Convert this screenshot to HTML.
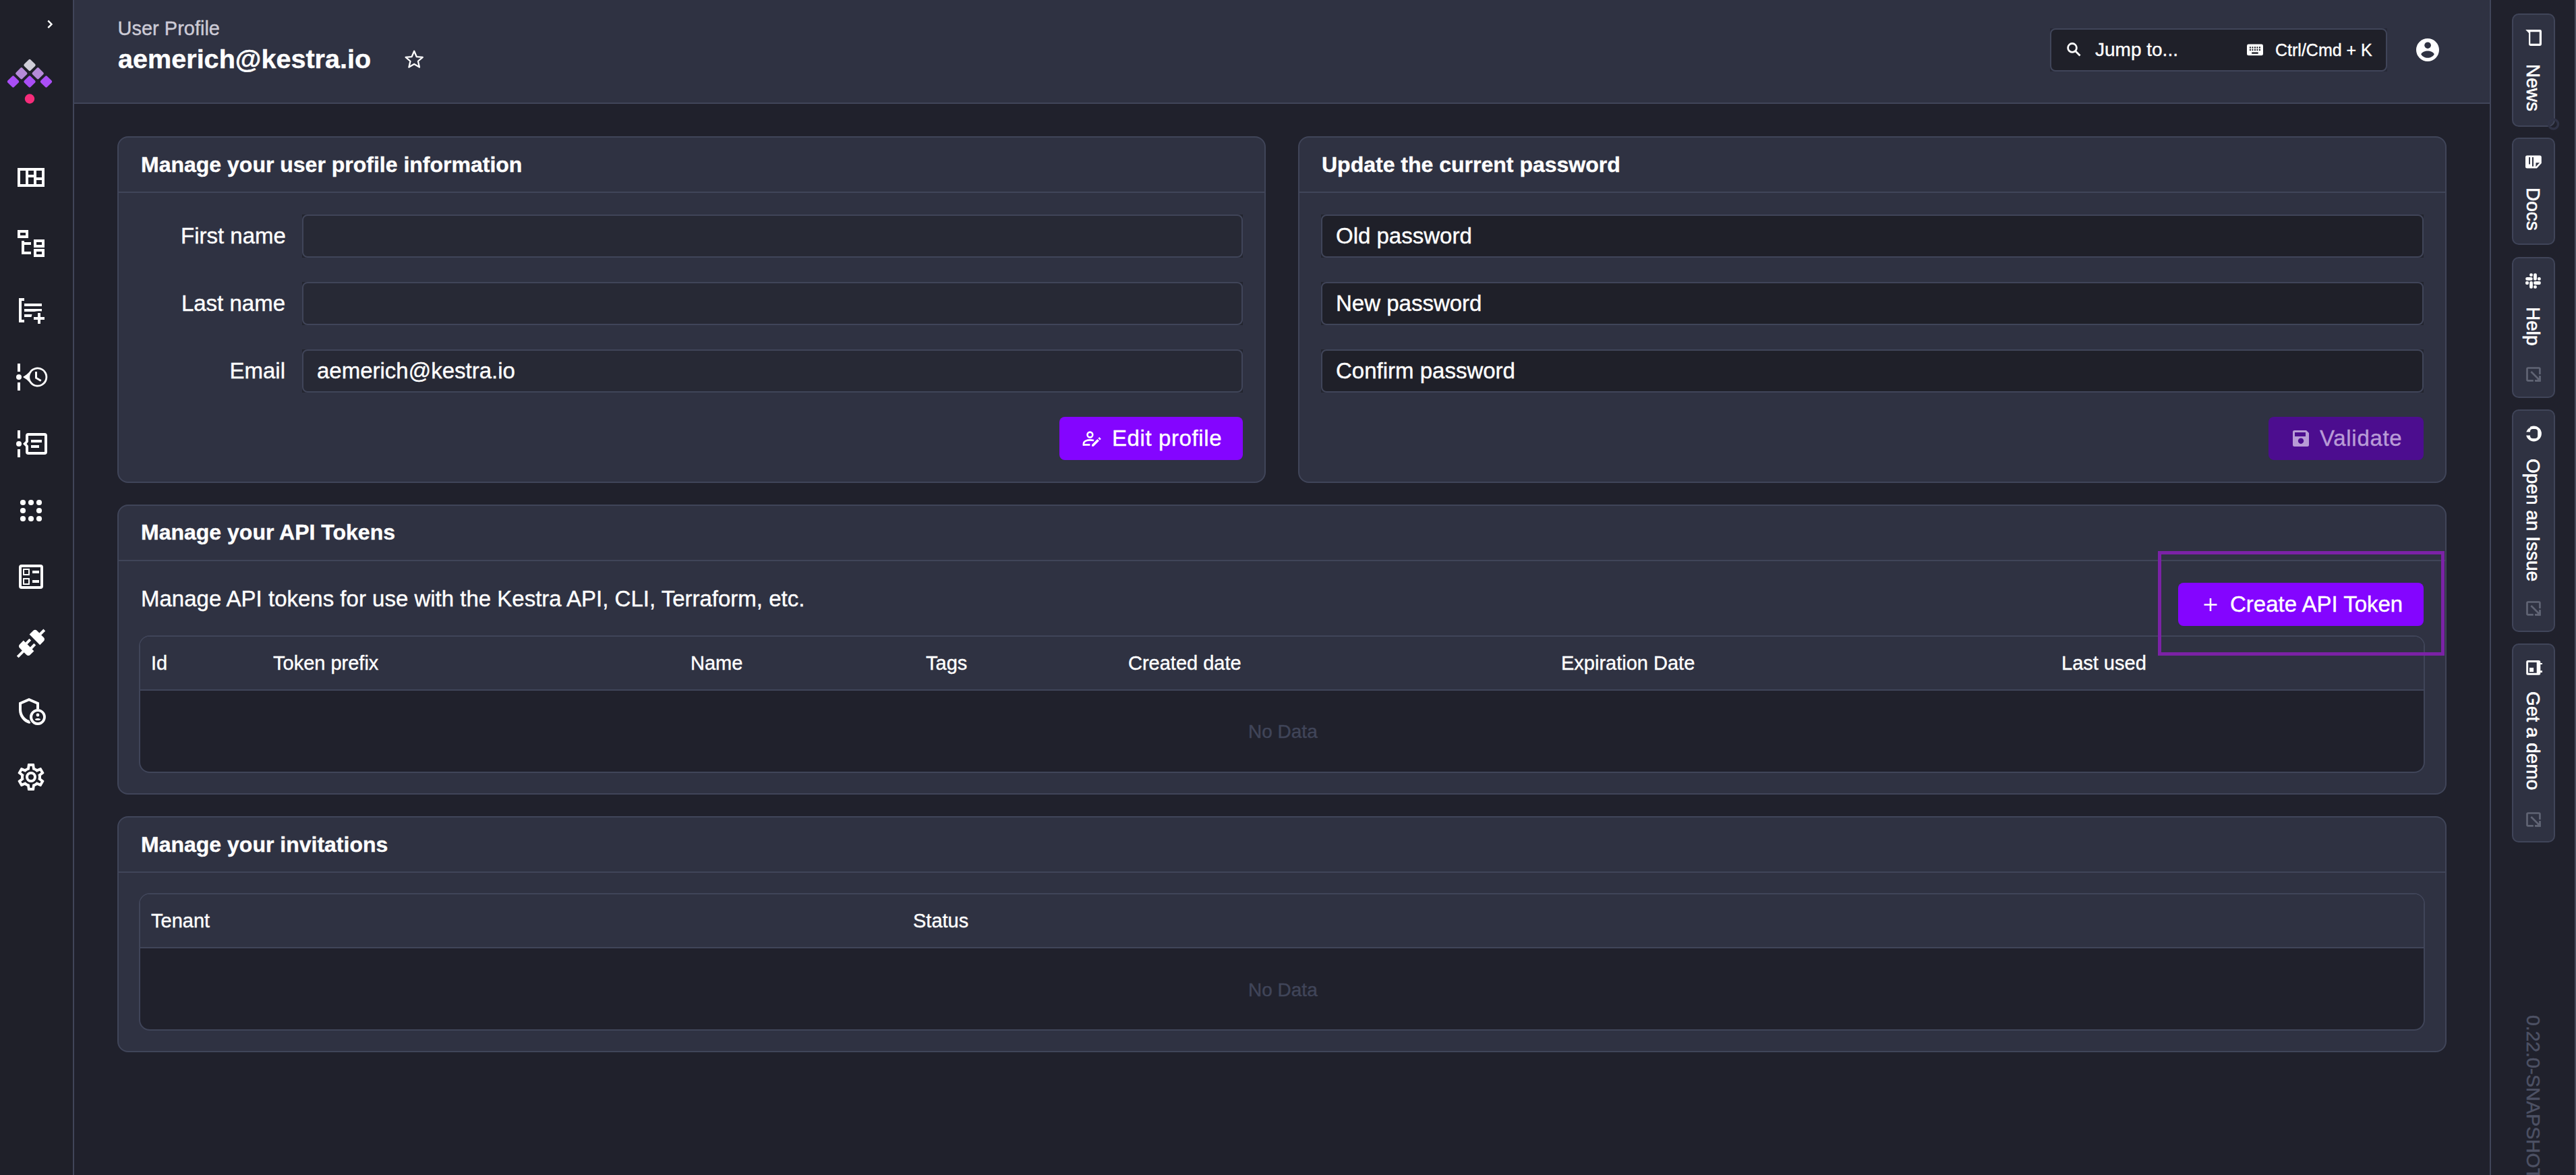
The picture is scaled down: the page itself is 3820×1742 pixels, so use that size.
<!DOCTYPE html>
<html><head><meta charset="utf-8"><style>
*{margin:0;padding:0;box-sizing:border-box}
html,body{width:3820px;height:1742px;overflow:hidden;background:#20212c;font-family:"Liberation Sans",sans-serif;color:#fff}
.a{position:absolute}
.t{position:absolute;white-space:nowrap;line-height:1;-webkit-text-stroke-width:0.4px}
.card{position:absolute;background:#2f3242;border:2px solid #404559;border-radius:16px}
.inp{position:absolute;border:2px solid #404559;border-radius:8px;background:#272935}
.dk{background:#1f2029}
.btn{position:absolute;border-radius:8px;background:#8405ff}
.tbl{position:absolute;border:2px solid #404559;border-radius:16px;background:#20212c;overflow:hidden}
.tab{position:absolute;background:#2f3242;border:2px solid #404559;border-radius:10px}
.vt{position:absolute;writing-mode:vertical-rl;white-space:nowrap;line-height:1;color:#fff}
svg{position:absolute;overflow:visible}
</style></head><body>
<div class="a" style="left:0px;top:0px;width:110px;height:1742px;background:#1f2029;border-right:2px solid #404559"></div>
<div class="a" style="left:110px;top:0px;width:3584px;height:154px;background:#2f3242;border-bottom:2px solid #404559"></div>
<div class="a" style="left:3692px;top:0px;width:128px;height:1742px;background:#20212c;border-left:2px solid #404559"></div>
<div class="t" style="left:174.5px;top:27.9px;font-size:29px;color:#cdcbd6;">User Profile</div>
<div class="t" style="left:175px;top:68.0px;font-size:39.6px;color:#fff;font-weight:700;">aemerich@kestra.io</div>
<svg style="left:0;top:0" width="1" height="1"><path d="M614.20,75.70 L617.73,84.05 L626.75,84.82 L619.91,90.75 L621.96,99.58 L614.20,94.90 L606.44,99.58 L608.49,90.75 L601.65,84.82 L610.67,84.05 Z" fill="none" stroke="#fff" stroke-width="2.3" stroke-linejoin="round"/></svg>
<div class="a" style="left:3040px;top:42px;width:500px;height:64px;background:#262836"></div>
<div class="inp dk" style="left:3040px;top:42px;width:500px;height:64px;"></div>
<svg style="left:0;top:0" width="1" height="1"><circle cx="3073" cy="70.9" r="6.4" fill="none" stroke="#fff" stroke-width="2.8"/><line x1="3077.5" y1="75.5" x2="3084.5" y2="82.5" stroke="#fff" stroke-width="2.8"/></svg>
<div class="t" style="left:3107px;top:59.7px;font-size:28px;color:#fff;">Jump to...</div>
<svg style="left:0;top:0" width="1" height="1"><rect x="3332" y="65.6" width="24" height="16.7" rx="2.4" fill="#fff"/><rect x="3335.9" y="69.3" width="2" height="2.3" fill="#1f2029"/><rect x="3339.4" y="69.3" width="2" height="2.3" fill="#1f2029"/><rect x="3343" y="69.3" width="2" height="2.3" fill="#1f2029"/><rect x="3346.4" y="69.3" width="2" height="2.3" fill="#1f2029"/><rect x="3350" y="69.3" width="2" height="2.3" fill="#1f2029"/><rect x="3335.9" y="72.8" width="2" height="2.3" fill="#1f2029"/><rect x="3339.4" y="72.8" width="2" height="2.3" fill="#1f2029"/><rect x="3343" y="72.8" width="2" height="2.3" fill="#1f2029"/><rect x="3346.4" y="72.8" width="2" height="2.3" fill="#1f2029"/><rect x="3350" y="72.8" width="2" height="2.3" fill="#1f2029"/><rect x="3339.2" y="77.4" width="9.5" height="2.4" fill="#1f2029"/></svg>
<div class="t" style="left:3374px;top:61.8px;font-size:25px;color:#fff;">Ctrl/Cmd + K</div>
<svg style="left:0;top:0" width="1" height="1"><circle cx="3600" cy="74" r="17" fill="#fff"/><circle cx="3600.1" cy="67.2" r="4.8" fill="#2f3242"/><path d="M3590.2,80.3C3593,73.8 3607.2,73.8 3609.8,80.3C3606.5,87.6 3593.5,87.6 3590.2,80.3Z" fill="#2f3242"/></svg>
<svg style="left:0;top:0" width="1" height="1"><polyline points="71.3,30.7 76.5,36 71.3,41.2" fill="none" stroke="#fff" stroke-width="2.4"/></svg>
<svg style="left:0;top:0" width="1" height="1"><rect x="37.30" y="89.80" width="13.4" height="13.4" rx="2" fill="#d0ced8" transform="rotate(45 44 96.5)"/><rect x="25.10" y="102.10" width="13.4" height="13.4" rx="2" fill="#b58ad8" transform="rotate(45 31.8 108.8)"/><rect x="49.50" y="102.10" width="13.4" height="13.4" rx="2" fill="#b58ad8" transform="rotate(45 56.2 108.8)"/><rect x="12.80" y="114.30" width="13.4" height="13.4" rx="2" fill="#aa4ef6" transform="rotate(45 19.5 121)"/><rect x="37.30" y="114.30" width="13.4" height="13.4" rx="2" fill="#aa4ef6" transform="rotate(45 44 121)"/><rect x="61.80" y="114.30" width="13.4" height="13.4" rx="2" fill="#aa4ef6" transform="rotate(45 68.5 121)"/><circle cx="44" cy="146.5" r="7.2" fill="#f62c7a"/></svg>
<svg style="left:0;top:0" width="1" height="1" fill="#fff"><path fill-rule="evenodd" d="M26,249H66V277H26Z M30,253V273H38V253Z M42,253V259H50V253Z M42,263V273H50V263Z M54,253V263H62V253Z M54,267V273H62V267Z"/><path fill-rule="evenodd" d="M26,341H42V353H26Z M30,345V349H38V345Z"/><path d="M32,357H36V359H46V363H36V373H46V377H32Z"/><path fill-rule="evenodd" d="M50,355H66V367H50Z M54,359V363H62V359Z"/><path fill-rule="evenodd" d="M50,369H66V381H50Z M54,373V377H62V373Z"/><path d="M28,442H36V446H32V474H36V478H28Z"/><rect x="36" y="450" width="26" height="4"/><path d="M36,458H62V461.5C58,461 54,461 51,462H36Z"/><path d="M36,466H47.5L46.5,470H36Z"/><path d="M56,464H60V470H66V474H60V480H56V474H50V470H56Z"/><rect x="26" y="539" width="4" height="12"/><circle cx="28" cy="559" r="4"/><rect x="26" y="567" width="4" height="12"/><path fill-rule="evenodd" d="M34,559Q40,555.5 43.24,551.75A14.5,14.5 0 1 1 43.24,566.25Q40,562.5 34,559Z M55.8,547.3A11.7,11.7 0 1 0 55.81,547.3Z"/><path d="M52,551H55V559.5L61.5,563.3L60,565.8L52,561Z"/><rect x="26" y="638" width="4" height="12"/><circle cx="28" cy="658" r="4"/><rect x="26" y="666" width="4" height="12"/><path fill-rule="evenodd" d="M42,642H66A4,4 0 0 1 70,646V670A4,4 0 0 1 66,674H42A4,4 0 0 1 38,670V662L34,658L38,654V646A4,4 0 0 1 42,642Z M42,646V655L39.5,658L42,661V670H66V646Z"/><rect x="46" y="652" width="16" height="4"/><rect x="46" y="660" width="12" height="4"/><circle cx="34" cy="745" r="4.1"/><circle cx="46" cy="745" r="4.1"/><circle cx="58" cy="745" r="4.1"/><circle cx="34" cy="757" r="4.1"/><circle cx="58" cy="757" r="4.1"/><circle cx="34" cy="769" r="4.1"/><circle cx="46" cy="769" r="4.1"/><circle cx="58" cy="769" r="4.1"/><path fill-rule="evenodd" d="M32,837H60A4,4 0 0 1 64,841V869A4,4 0 0 1 60,873H32A4,4 0 0 1 28,869V841A4,4 0 0 1 32,837Z M32,841V869H60V841Z"/><path fill-rule="evenodd" d="M34,843H44V853H34Z M36,845V851H42V845Z"/><rect x="48" y="846" width="10" height="4"/><path fill-rule="evenodd" d="M34,857H44V867H34Z M36,859V865H42V859Z"/><rect x="48" y="860" width="10" height="4"/><path transform="translate(22 930) scale(2)" d="M21.4 7.5C22.2 8.3 22.2 9.6 21.4 10.3L18.6 13.1L10.8 5.3L13.6 2.5C14.4 1.7 15.7 1.7 16.4 2.5L18.2 4.3L21.2 1.3L22.6 2.7L19.6 5.7L21.4 7.5M15.6 13.3L14.2 11.9L11.4 14.7L9.3 12.6L12.1 9.8L10.7 8.4L7.9 11.2L6.4 9.8L3.6 12.6C2.8 13.4 2.8 14.7 3.6 15.4L5.4 17.2L1.4 21.2L2.8 22.6L6.8 18.6L8.6 20.4C9.4 21.2 10.7 21.2 11.4 20.4L14.2 17.6L12.8 16.2L15.6 13.3Z"/><path d="M43,1035L58,1041.5V1051A12,12 0 0 0 54,1051.3V1044L43,1039.2L32,1044V1052C32,1059 36.5,1065.5 43.5,1068C44,1069.5 44.6,1070.8 45.4,1071.9C44.6,1072.2 43.8,1072.5 43,1072.7C34.5,1070.5 28,1062 28,1052.5V1041.5Z"/><path fill-rule="evenodd" d="M56,1051A12,12 0 1 1 55.9,1051Z M56,1055A8,8 0 1 0 56.1,1055Z"/><circle cx="56" cy="1060" r="2.4"/><path d="M51.8,1066.6C53,1064.6 59,1064.6 60.2,1066.6C59,1068.6 53,1068.6 51.8,1066.6Z"/><path transform="translate(22 1128) scale(2)" d="M12,8A4,4 0 0,1 16,12A4,4 0 0,1 12,16A4,4 0 0,1 8,12A4,4 0 0,1 12,8M12,10A2,2 0 0,0 10,12A2,2 0 0,0 12,14A2,2 0 0,0 14,12A2,2 0 0,0 12,10M10,22C9.75,22 9.54,21.82 9.5,21.58L9.13,18.93C8.5,18.68 7.96,18.34 7.44,17.94L4.95,18.95C4.73,19.03 4.46,18.95 4.34,18.73L2.34,15.27C2.21,15.05 2.27,14.78 2.46,14.63L4.57,12.97L4.5,12L4.57,11L2.46,9.37C2.27,9.22 2.21,8.95 2.34,8.73L4.34,5.27C4.46,5.05 4.73,4.96 4.95,5.05L7.44,6.05C7.96,5.66 8.5,5.32 9.13,5.07L9.5,2.42C9.54,2.18 9.75,2 10,2H14C14.25,2 14.46,2.18 14.5,2.42L14.87,5.07C15.5,5.32 16.04,5.66 16.56,6.05L19.05,5.05C19.27,4.96 19.54,5.05 19.66,5.27L21.66,8.73C21.79,8.95 21.73,9.22 21.54,9.37L19.43,11L19.5,12L19.43,13L21.54,14.63C21.730,14.78 21.79,15.05 21.66,15.27L19.66,18.73C19.54,18.95 19.27,19.04 19.05,18.95L16.56,17.95C16.04,18.34 15.5,18.68 14.87,18.93L14.5,21.58C14.46,21.82 14.25,22 14,22H10M11.25,4L10.88,6.61C9.68,6.86 8.62,7.5 7.85,8.39L5.44,7.35L4.69,8.65L6.8,10.2C6.4,11.37 6.4,12.64 6.8,13.8L4.68,15.36L5.43,16.66L7.86,15.62C8.63,16.5 9.68,17.14 10.87,17.38L11.24,20H12.76L13.13,17.39C14.32,17.14 15.37,16.5 16.14,15.62L18.57,16.66L19.32,15.36L17.2,13.81C17.6,12.64 17.6,11.37 17.2,10.2L19.31,8.650L18.56,7.35L16.15,8.39C15.38,7.5 14.32,6.86 13.12,6.62L12.75,4H11.25Z"/></svg>
<div class="card" style="left:174px;top:202px;width:1703px;height:514px;"></div>
<div class="a" style="left:174px;top:284px;width:1703px;height:2px;background:#404559"></div>
<div class="t" style="left:209px;top:227.7px;font-size:32px;color:#fff;font-weight:700;">Manage your user profile information</div>
<div class="t" style="left:268px;top:333.1px;font-size:33px;color:#fff;width:155px;text-align:right;">First name</div>
<div class="a" style="left:448px;top:318px;width:1395px;height:64px;background:#23252f"></div>
<div class="inp" style="left:448px;top:318px;width:1395px;height:64px;"></div>
<div class="t" style="left:268px;top:433.1px;font-size:33px;color:#fff;width:155px;text-align:right;">Last name</div>
<div class="a" style="left:448px;top:418px;width:1395px;height:64px;background:#23252f"></div>
<div class="inp" style="left:448px;top:418px;width:1395px;height:64px;"></div>
<div class="t" style="left:268px;top:533.1px;font-size:33px;color:#fff;width:155px;text-align:right;">Email</div>
<div class="a" style="left:448px;top:518px;width:1395px;height:64px;background:#23252f"></div>
<div class="inp" style="left:448px;top:518px;width:1395px;height:64px;"></div>
<div class="t" style="left:470px;top:533.1px;font-size:33px;color:#fff;">aemerich@kestra.io</div>
<div class="btn" style="left:1571px;top:618px;width:272px;height:64px;"></div>
<svg style="left:0;top:0" width="1" height="1"><circle cx="1616.4" cy="644.5" r="3.9" fill="none" stroke="#fff" stroke-width="2.6"/><path d="M1607,660.5V657.5C1607,654 1612,652.4 1616.5,652.4C1618.7,652.4 1620.6,652.7 1622,653.1" fill="none" stroke="#fff" stroke-width="2.6"/><path d="M1605.8,659.4H1616.4" stroke="#fff" stroke-width="2.8"/><path d="M1619.1,661.8V659.2L1627.4,650.9L1630,653.5L1621.7,661.8Z M1628.4,649.9L1630.2,648.1L1632.8,650.7L1631,652.5Z" fill="#fff"/></svg>
<div class="t" style="left:1649px;top:633.3px;font-size:33px;color:#fff;letter-spacing:0.6px;">Edit profile</div>
<div class="card" style="left:1925px;top:202px;width:1703px;height:514px;"></div>
<div class="a" style="left:1925px;top:284px;width:1703px;height:2px;background:#404559"></div>
<div class="t" style="left:1960px;top:227.7px;font-size:32px;color:#fff;font-weight:700;">Update the current password</div>
<div class="a" style="left:1959px;top:318px;width:1635px;height:64px;background:#23252f"></div>
<div class="inp dk" style="left:1959px;top:318px;width:1635px;height:64px;"></div>
<div class="t" style="left:1981px;top:333.1px;font-size:33px;color:#fff;">Old password</div>
<div class="a" style="left:1959px;top:418px;width:1635px;height:64px;background:#23252f"></div>
<div class="inp dk" style="left:1959px;top:418px;width:1635px;height:64px;"></div>
<div class="t" style="left:1981px;top:433.1px;font-size:33px;color:#fff;">New password</div>
<div class="a" style="left:1959px;top:518px;width:1635px;height:64px;background:#23252f"></div>
<div class="inp dk" style="left:1959px;top:518px;width:1635px;height:64px;"></div>
<div class="t" style="left:1981px;top:533.1px;font-size:33px;color:#fff;">Confirm password</div>
<div class="btn" style="left:3364px;top:618px;width:230px;height:64px;background:#4c0d8f"></div>
<svg style="left:0;top:0" width="1" height="1"><path fill-rule="evenodd" d="M3402,638H3420L3424,642V659.5A2.5,2.5 0 0 1 3421.5,662H3402.5A2.5,2.5 0 0 1 3400,659.5V640.5A2.5,2.5 0 0 1 3402.5,638Z M3403,641V647H3419V641Z M3412,649.5A4.2,4.2 0 1 0 3412.1,649.5Z" fill="#b89bd6"/></svg>
<div class="t" style="left:3440px;top:633.1px;font-size:33px;color:#b89bd6;letter-spacing:0.7px;">Validate</div>
<div class="card" style="left:174px;top:748px;width:3454px;height:430px;"></div>
<div class="a" style="left:174px;top:830px;width:3454px;height:2px;background:#404559"></div>
<div class="t" style="left:209px;top:772.9px;font-size:32px;color:#fff;font-weight:700;">Manage your API Tokens</div>
<div class="t" style="left:209px;top:871.1px;font-size:33px;color:#fff;">Manage API tokens for use with the Kestra API, CLI, Terraform, etc.</div>
<div class="btn" style="left:3230px;top:864px;width:364px;height:64px;"></div>
<svg style="left:0;top:0" width="1" height="1"><path d="M3278,887V906M3268.5,896.5H3287.5" stroke="#fff" stroke-width="2.6"/></svg>
<div class="t" style="left:3307px;top:878.8px;font-size:33px;color:#fff;">Create API Token</div>
<div class="tbl" style="left:206px;top:942px;width:3390px;height:204px;"></div>
<div class="a" style="left:208px;top:944px;width:3386px;height:78px;background:#2f3242;border-top-left-radius:14px;border-top-right-radius:14px"></div>
<div class="a" style="left:208px;top:1022px;width:3386px;height:2px;background:#404559"></div>
<div class="t" style="left:224px;top:969.4px;font-size:29px;color:#fff;">Id</div>
<div class="t" style="left:405px;top:969.4px;font-size:29px;color:#fff;">Token prefix</div>
<div class="t" style="left:1024px;top:969.4px;font-size:29px;color:#fff;">Name</div>
<div class="t" style="left:1373px;top:969.4px;font-size:29px;color:#fff;">Tags</div>
<div class="t" style="left:1673px;top:969.4px;font-size:29px;color:#fff;">Created date</div>
<div class="t" style="left:2315px;top:969.4px;font-size:29px;color:#fff;">Expiration Date</div>
<div class="t" style="left:3057px;top:969.4px;font-size:29px;color:#fff;">Last used</div>
<div class="t" style="left:1851px;top:1071.3px;font-size:28px;color:#404559;">No Data</div>
<div class="a" style="left:3200px;top:817px;width:425px;height:155px;border:5px solid #7b22a6"></div>
<div class="card" style="left:174px;top:1210px;width:3454px;height:350px;"></div>
<div class="a" style="left:174px;top:1292px;width:3454px;height:2px;background:#404559"></div>
<div class="t" style="left:209px;top:1235.5px;font-size:32px;color:#fff;font-weight:700;">Manage your invitations</div>
<div class="tbl" style="left:206px;top:1324px;width:3390px;height:204px;"></div>
<div class="a" style="left:208px;top:1326px;width:3386px;height:78px;background:#2f3242;border-top-left-radius:14px;border-top-right-radius:14px"></div>
<div class="a" style="left:208px;top:1404px;width:3386px;height:2px;background:#404559"></div>
<div class="t" style="left:224px;top:1351.4px;font-size:29px;color:#fff;">Tenant</div>
<div class="t" style="left:1354px;top:1351.4px;font-size:29px;color:#fff;">Status</div>
<div class="t" style="left:1851px;top:1454.3px;font-size:28px;color:#404559;">No Data</div>
<div class="tab" style="left:3725px;top:20px;width:64px;height:168px;"></div>
<div class="tab" style="left:3725px;top:204px;width:64px;height:159px;"></div>
<div class="tab" style="left:3725px;top:381px;width:64px;height:209px;"></div>
<div class="tab" style="left:3725px;top:607px;width:64px;height:330px;"></div>
<div class="tab" style="left:3725px;top:954px;width:64px;height:295px;"></div>
<div class="vt" style="left:3742px;top:94.5px;font-size:28px;-webkit-text-stroke:0.6px #fff;">News</div>
<div class="vt" style="left:3742px;top:277.5px;font-size:28px;-webkit-text-stroke:0.6px #fff;">Docs</div>
<div class="vt" style="left:3742px;top:454.5px;font-size:28px;-webkit-text-stroke:0.6px #fff;">Help</div>
<div class="vt" style="left:3742px;top:680px;font-size:28px;-webkit-text-stroke:0.6px #fff;">Open an Issue</div>
<div class="vt" style="left:3742px;top:1025px;font-size:28px;-webkit-text-stroke:0.6px #fff;">Get a demo</div>
<svg style="left:0;top:0" width="1" height="1"><path fill-rule="evenodd" fill="#fff" d="M3745.2,44H3766.6A2.4,2.4 0 0 1 3769,46.4V65.6A2.4,2.4 0 0 1 3766.6,68H3752.4A2.4,2.4 0 0 1 3750,65.6V49Z M3752.3,47.2V64.7H3765.8V47.2Z"/><path fill="#fff" d="M3747.5,230.5H3766.3A2.5,2.5 0 0 1 3768.8,233V242L3761.9,249.4H3747.5A2.5,2.5 0 0 1 3745,246.9V233A2.5,2.5 0 0 1 3747.5,230.5Z"/><rect x="3750.1" y="233.1" width="1.9" height="10.4" fill="#2f3242"/><rect x="3755" y="233.1" width="2" height="13.6" fill="#2f3242"/><path d="M3760.5,241.3H3766.1L3760.3,247.2Z" fill="#2f3242"/><g fill="#fff"><rect x="3751.1" y="405.2" width="4.8" height="4.8" rx="2.2"/><rect x="3757.1" y="405.2" width="4.8" height="10.5" rx="2.2"/><rect x="3762.9" y="411" width="4.9" height="4.7" rx="2.2"/><rect x="3745.2" y="411" width="10.5" height="4.7" rx="2.2"/><rect x="3745" y="416.9" width="5.0" height="5.0" rx="2.2"/><rect x="3751.1" y="417.1" width="4.8" height="10.7" rx="2.2"/><rect x="3757.1" y="416.9" width="10.7" height="5.0" rx="2.2"/><rect x="3757.1" y="422.9" width="4.8" height="4.9" rx="2.2"/></g><circle cx="3757.4" cy="642.9" r="11.5" fill="#fff"/><rect x="3752" y="636" width="11.2" height="13.9" rx="4" fill="#2f3242"/><rect x="3745" y="640.4" width="8" height="5.1" fill="#2f3242"/><path d="M3746,639.5Q3747.5,635.5 3752,633.5" fill="none" stroke="#2f3242" stroke-width="1.3"/><path fill-rule="evenodd" fill="#fff" d="M3748.7,979H3764.8A2.5,2.5 0 0 1 3767.3,981.5V982.9H3770V985H3767.3V994.2H3770V996.9H3767.3V998.3A2.5,2.5 0 0 1 3764.8,1000.8H3748.7A2.5,2.5 0 0 1 3746.2,998.3V981.5A2.5,2.5 0 0 1 3748.7,979Z M3749.1,981.9V997.7H3761.7V981.9Z"/><rect x="3751" y="989.9" width="6.1" height="6.1" fill="#fff"/><g fill="none" stroke="#606474" stroke-width="2.7"><path d="M3766.4,555V547Q3766.4,545.5 3765,545.5H3749Q3747.5,545.5 3747.5,547V563Q3747.5,564.4 3749,564.4H3756.8"/><path d="M3759,564.4H3766.4V557.1"/><path d="M3753.4,551L3765,562.6"/></g><path d="M3759.5,565.7H3767.7V557.5Z" fill="#606474"/><g fill="none" stroke="#606474" stroke-width="2.7"><path d="M3766.4,902V894Q3766.4,892.5 3765,892.5H3749Q3747.5,892.5 3747.5,894V910Q3747.5,911.4 3749,911.4H3756.8"/><path d="M3759,911.4H3766.4V904.1"/><path d="M3753.4,898L3765,909.6"/></g><path d="M3759.5,912.7H3767.7V904.5Z" fill="#606474"/><g fill="none" stroke="#606474" stroke-width="2.7"><path d="M3766.4,1215V1207Q3766.4,1205.5 3765,1205.5H3749Q3747.5,1205.5 3747.5,1207V1223Q3747.5,1224.4 3749,1224.4H3756.8"/><path d="M3759,1224.4H3766.4V1217.1"/><path d="M3753.4,1211L3765,1222.6"/></g><path d="M3759.5,1225.7H3767.7V1217.5Z" fill="#606474"/><circle cx="3786.5" cy="184" r="7" fill="none" stroke="#303346" stroke-width="3.5"/></svg>
<div class="vt" style="left:3743px;top:1505px;font-size:28.3px;color:#4d5164;-webkit-text-stroke:0.5px #4d5164">0.22.0-SNAPSHOT</div>
<div class="a" style="left:3818px;top:0px;width:2px;height:1742px;background:#4a4d5c"></div>
</body></html>
